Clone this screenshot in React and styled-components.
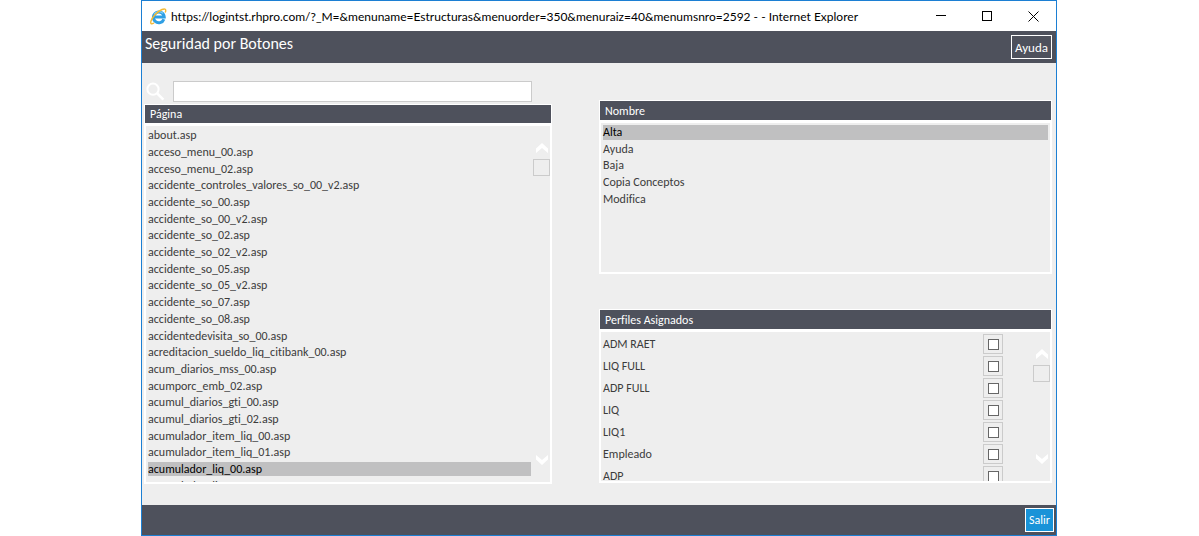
import React, { useState } from "react"
import styled, { createGlobalStyle } from "styled-components"

const colors = {
  frame: "#1c7fd3",
  slate: "#4e515c",
  surface: "#eeeeee",
  line: "#cbcbcb",
  selected: "#c0c0c1",
  text: "#3c3c3c",
  action: "#1993d8",
  white: "#ffffff",
  black: "#000000",
}

const GlobalStyle = createGlobalStyle`
  *,
  *::before,
  *::after {
    box-sizing: border-box;
  }

  body {
    margin: 0;
    background: ${colors.white};
    font-family: Calibri, Carlito, "Open Sans", sans-serif;
    font-size: 12px;
    font-variant-ligatures: none;
    color: ${colors.text};
  }

  button,
  input {
    margin: 0;
    padding: 0;
    font: inherit;
    font-variant-ligatures: none;
    color: inherit;
  }
`

const Page = styled.div`
  display: flex;
  min-height: 100vh;
  padding: 0 142px 0 141px;
`

const Window = styled.div`
  display: flex;
  flex: 1;
  flex-direction: column;
  min-width: 0;
  border: 1px solid ${colors.frame};
  background: ${colors.surface};
`

const TitleBar = styled.header`
  display: flex;
  align-items: center;
  height: 30px;
  padding-left: 8px;
  background: ${colors.white};
  color: ${colors.black};
  font-family: "Segoe UI", Lato, sans-serif;
`

const WindowTitle = styled.span`
  flex: 1;
  min-width: 0;
  margin-left: 4px;
  overflow: hidden;
  white-space: nowrap;
  text-overflow: ellipsis;
`

const WindowButton = styled.button`
  display: flex;
  align-items: center;
  justify-content: center;
  width: 46px;
  height: 28px;
  border: none;
  background: none;
`

const Header = styled.div`
  display: flex;
  align-items: flex-start;
  justify-content: space-between;
  height: 32px;
  padding: 4px 4px 0 3px;
  background: ${colors.slate};
  color: ${colors.white};
`

const PageTitle = styled.h1`
  margin: 0;
  font-size: 16px;
  font-weight: normal;
  line-height: 18px;
`

const ActionButton = styled.button`
  height: 24px;
  padding: 0 3px;
  border: 1px solid ${colors.white};
  background: ${props => (props.$primary ? colors.action : "transparent")};
  color: ${colors.white};
  font-size: ${props => (props.$primary ? "12px" : "13px")};
`

const Content = styled.main`
  display: grid;
  grid-template-columns: 408fr 453fr;
  gap: 47px;
  flex: 1;
  padding: 18px 4px 21px 2px;
`

const Column = styled.div`
  display: flex;
  flex-direction: column;
  min-width: 0;
`

const RightColumn = styled(Column)`
  gap: 35px;
  padding-top: 19px;
`

const SearchRow = styled.form`
  display: flex;
  align-items: center;
  gap: 8px;
  height: 21px;
  margin: 0 20px 2px 2px;
`

const SearchInput = styled.input`
  flex: 1;
  min-width: 0;
  height: 21px;
  padding: 0 4px;
  border: 1px solid ${colors.line};
  background: ${colors.white};
`

const PanelTitle = styled.h2`
  height: ${props => (props.$short ? "19px" : "20px")};
  margin: 0;
  padding-left: 5px;
  border: 1px solid ${colors.white};
  border-bottom: none;
  background: ${colors.slate};
  color: ${colors.white};
  font-size: 12px;
  font-weight: normal;
  line-height: ${props => (props.$short ? "18px" : "20px")};
`

const PanelBody = styled.div`
  display: flex;
  justify-content: space-between;
  border: 2px solid ${colors.white};
  border-top-width: 3px;
  overflow: hidden;
  height: ${props => props.$height}px;
`

const OptionList = styled.ul`
  display: grid;
  flex: 1;
  grid-auto-rows: 1fr;
  gap: 2px;
  height: ${props => props.$height}px;
  margin: 2px 2px 0;
  padding: 0;
  list-style: none;
`

const Option = styled.button`
  display: flex;
  align-items: center;
  width: 100%;
  height: 100%;
  border: none;
  background: ${props => (props.$active ? colors.selected : "transparent")};
  color: ${props => (props.$active ? colors.black : colors.text)};
  line-height: 14px;
`

const ProfileList = styled.ul`
  display: flex;
  flex: 1;
  flex-direction: column;
  gap: 2px;
  margin: 2px 30px 0 2px;
  padding: 0;
  list-style: none;
`

const Profile = styled.label`
  display: flex;
  align-items: center;
  justify-content: space-between;
  height: 20px;
`

const Checkbox = styled.input`
  display: grid;
  place-content: center start;
  width: 20px;
  height: 20px;
  padding-left: 4px;
  border: 1px solid ${colors.line};
  appearance: none;

  &::before {
    content: "";
    width: 11px;
    height: 11px;
    border: 1px solid #666666;
    background: ${colors.white};
  }

  &:checked::before {
    background: ${colors.slate};
  }
`

const Scrollbar = styled.div`
  display: flex;
  flex-direction: column;
  width: 17px;
  padding: 14px 0;
`

const ScrollButton = styled.button`
  display: flex;
  align-items: center;
  justify-content: center;
  height: 16px;
  border: none;
  background: none;
`

const ScrollTrack = styled.div`
  flex: 1;
  padding-top: 3px;
`

const ScrollThumb = styled.div`
  height: 17px;
  border: 1px solid ${colors.line};
`

const Footer = styled.footer`
  display: flex;
  align-items: center;
  justify-content: flex-end;
  height: 30px;
  padding-right: 2px;
  background: ${colors.slate};
`

const ExplorerIcon = () => (
  <svg width="17" height="17" viewBox="0 0 17 17" fill="none" aria-hidden="true">
    <path d="M13.9 11.2A5.4 5.4 0 1 1 14.2 8.9H4.6" stroke="#2f9fe4" strokeWidth="3" />
    <path d="M4.2 6.4A5.4 5.4 0 0 1 13 5.4" stroke="#7fd0f7" strokeWidth="1.2" />
    <path
      d="M3.6 15.2C1.4 16.6.2 15.6 1 13 2.2 9 7.4 3.4 12 1.5c3.2-1.3 4.4-.2 3.4 2.6"
      stroke="#f3b933"
      strokeWidth="1.4"
      strokeLinecap="round"
    />
  </svg>
)

const SearchIcon = () => (
  <svg width="19" height="19" viewBox="0 0 19 19" fill="none" stroke={colors.white} aria-hidden="true">
    <circle cx="7" cy="7.2" r="5.6" strokeWidth="2" />
    <path d="M11.2 11.4l6.2 6.2" strokeWidth="2.6" />
  </svg>
)

const Chevron = ({ down }) => (
  <svg width="12" height="10" viewBox="0 0 12 10" aria-hidden="true">
    <path d={down ? "M0 0L6 5 12 0V4.5L6 10 0 4.5z" : "M0 10L6 5l6 5V5.5L6 0 0 5.5z"} fill={colors.white} />
  </svg>
)

const MinimizeIcon = () => (
  <svg width="10" height="10" stroke="#000" shapeRendering="crispEdges" aria-hidden="true">
    <path d="M0 4.500h10" />
  </svg>
)

const MaximizeIcon = () => (
  <svg width="10" height="10" fill="none" stroke="#000" shapeRendering="crispEdges" aria-hidden="true">
    <path d="M.5.5h9v9h-9z" />
  </svg>
)

const CloseIcon = () => (
  <svg width="11" height="11" fill="none" stroke="#000" aria-hidden="true">
    <path d="M.5.5l10 10M10.5.5l-10 10" />
  </svg>
)

const ScrollControls = () => (
  <Scrollbar>
    <ScrollButton type="button" aria-label="Subir">
      <Chevron />
    </ScrollButton>
    <ScrollTrack>
      <ScrollThumb />
    </ScrollTrack>
    <ScrollButton type="button" aria-label="Bajar">
      <Chevron down />
    </ScrollButton>
  </Scrollbar>
)

const Options = ({ items, value, onChange, height }) => (
  <OptionList $height={height}>
    {items.map(item => (
      <li key={item}>
        <Option
          type="button"
          $active={item === value}
          aria-pressed={item === value}
          onClick={() => onChange(item)}
        >
          {item}
        </Option>
      </li>
    ))}
  </OptionList>
)

const pages = [
  "about.asp",
  "acceso_menu_00.asp",
  "acceso_menu_02.asp",
  "accidente_controles_valores_so_00_v2.asp",
  "accidente_so_00.asp",
  "accidente_so_00_v2.asp",
  "accidente_so_02.asp",
  "accidente_so_02_v2.asp",
  "accidente_so_05.asp",
  "accidente_so_05_v2.asp",
  "accidente_so_07.asp",
  "accidente_so_08.asp",
  "accidentedevisita_so_00.asp",
  "acreditacion_sueldo_liq_citibank_00.asp",
  "acum_diarios_mss_00.asp",
  "acumporc_emb_02.asp",
  "acumul_diarios_gti_00.asp",
  "acumul_diarios_gti_02.asp",
  "acumulador_item_liq_00.asp",
  "acumulador_item_liq_01.asp",
  "acumulador_liq_00.asp",
  "acumulador_liq_02.asp",
]

const buttons = ["Alta", "Ayuda", "Baja", "Copia Conceptos", "Modifica"]

const profiles = ["ADM RAET", "LIQ FULL", "ADP FULL", "LIQ", "LIQ1", "Empleado", "ADP"]

export default function App() {
  const [page, setPage] = useState("acumulador_liq_00.asp")
  const [button, setButton] = useState("Alta")

  return (
    <Page>
      <GlobalStyle />
      <Window>
        <TitleBar>
          <ExplorerIcon />
          <WindowTitle>
            https://logintst.rhpro.com/?_M=&amp;menuname=Estructuras&amp;menuorder=350&amp;menuraiz=40&amp;menumsnro=2592 - - Internet Explorer
          </WindowTitle>
          <WindowButton type="button" aria-label="Minimizar">
            <MinimizeIcon />
          </WindowButton>
          <WindowButton type="button" aria-label="Maximizar">
            <MaximizeIcon />
          </WindowButton>
          <WindowButton type="button" aria-label="Cerrar">
            <CloseIcon />
          </WindowButton>
        </TitleBar>
        <Header>
          <PageTitle>Seguridad por Botones</PageTitle>
          <ActionButton type="button">Ayuda</ActionButton>
        </Header>
        <Content>
          <Column>
            <SearchRow role="search" onSubmit={e => e.preventDefault()}>
              <SearchIcon />
              <SearchInput type="text" aria-label="Buscar página" />
            </SearchRow>
            <PanelTitle $short>Página</PanelTitle>
            <PanelBody $height={361}>
              <Options items={pages} value={page} onChange={setPage} height={365} />
              <ScrollControls />
            </PanelBody>
          </Column>
          <RightColumn>
            <section>
              <PanelTitle>Nombre</PanelTitle>
              <PanelBody $height={154}>
                <Options items={buttons} value={button} onChange={setButton} height={81} />
              </PanelBody>
            </section>
            <section>
              <PanelTitle>Perfiles Asignados</PanelTitle>
              <PanelBody $height={154}>
                <ProfileList>
                  {profiles.map(name => (
                    <li key={name}>
                      <Profile>
                        {name}
                        <Checkbox type="checkbox" />
                      </Profile>
                    </li>
                  ))}
                </ProfileList>
                <ScrollControls />
              </PanelBody>
            </section>
          </RightColumn>
        </Content>
        <Footer>
          <ActionButton type="button" $primary>
            Salir
          </ActionButton>
        </Footer>
      </Window>
    </Page>
  )
}
